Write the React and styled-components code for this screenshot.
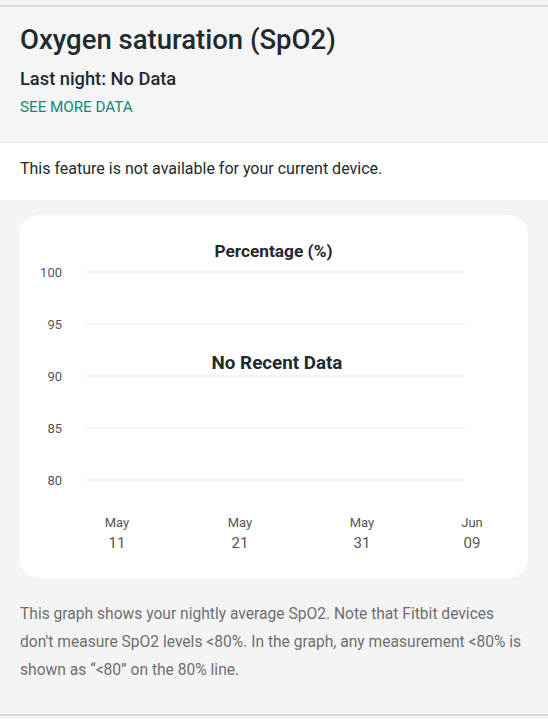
import React from "react";
import styled, { createGlobalStyle } from "styled-components";

const Global = createGlobalStyle`
  html, body { margin: 0; padding: 0; background: #f4f4f4; }
  body { font-family: Roboto, "Noto Sans", "Liberation Sans", sans-serif; }
  * { box-sizing: border-box; }
`;

const Page = styled.div`
  width: 548px;
  min-height: 719px;
  padding-top: 5px;
  background: #f4f4f4;
`;

const Header = styled.header`
  border-top: 2px solid #d9d9d9;
  border-bottom: 1px solid #e2e2e2;
  background: #f5f5f5;
  padding: 16px 20px 0;
  height: 138px;
  display: flex;
  flex-direction: column;
`;

const Title = styled.h1`
  margin: 0;
  font-size: 27.5px;
  line-height: 34px;
  font-weight: 500;
  color: #1e2a30;
`;

const Subtitle = styled.div`
  margin-top: 10px;
  font-size: 18.3px;
  line-height: 24px;
  font-weight: 500;
  color: #1e2a30;
`;

const Link = styled.a`
  margin-top: 6px;
  font-size: 15.2px;
  line-height: 20px;
  color: #10897e;
  text-transform: uppercase;
  text-decoration: none;
`;

const Notice = styled.div`
  background: #ffffff;
  height: 57px;
  padding: 0 20px 6px;
  display: flex;
  align-items: center;
  font-size: 16px;
  color: #222a2e;
`;

const Body = styled.section`
  padding: 15px 19px 0 19px;
`;

const Card = styled.div`
  width: 509px;
  background: #ffffff;
  border-radius: 20px;
  padding: 24px 0 17px;
  display: flex;
  flex-direction: column;
  align-items: center;
`;

const ChartTitle = styled.div`
  font-size: 17.3px;
  line-height: 24px;
  font-weight: 700;
  color: #1e2a30;
`;

const Plot = styled.svg`
  display: block;
  width: 509px;
  height: 298px;
  font-family: Roboto, "Noto Sans", "Liberation Sans", sans-serif;
`;

const Footnote = styled.p`
  margin: 22px 0 0;
  padding: 0 20px;
  font-size: 15.6px;
  line-height: 28px;
  color: #6f6f6f;
`;

const BottomRule = styled.div`
  margin-top: 30px;
  border-top: 2px solid #d9d9d9;
`;

const yTicks = [100, 95, 90, 85, 80];
const xTicks = [
  { m: "May", d: "11", x: 98 },
  { m: "May", d: "21", x: 221 },
  { m: "May", d: "31", x: 343 },
  { m: "Jun", d: "09", x: 453 },
];

export default function App() {
  return (
    <>
      <Global />
      <Page>
        <Header>
          <Title>Oxygen saturation (SpO2)</Title>
          <Subtitle>Last night: No Data</Subtitle>
          <Link href="#">See more data</Link>
        </Header>
        <Notice>This feature is not available for your current device.</Notice>
        <Body>
          <Card>
            <ChartTitle>Percentage (%)</ChartTitle>
            <Plot viewBox="0 0 509 298">
              {yTicks.map((v, i) => {
                const y = 9 + i * 52;
                return (
                  <g key={v}>
                    <line x1="65" x2="446" y1={y} y2={y} stroke="#f2f2f2" strokeWidth="1.5" />
                    <text x="43" y={y} textAnchor="end" dominantBaseline="central" fontSize="13" fill="#555">
                      {v}
                    </text>
                  </g>
                );
              })}
              <text x="258" y="100" textAnchor="middle" dominantBaseline="central" fontSize="18.8" fontWeight="700" fill="#1e2a30">
                No Recent Data
              </text>
              {xTicks.map((t) => (
                <g key={t.d}>
                  <text x={t.x} y="259" textAnchor="middle" dominantBaseline="central" fontSize="13" fill="#555">
                    {t.m}
                  </text>
                  <text x={t.x} y="280" textAnchor="middle" dominantBaseline="central" fontSize="15" fill="#555">
                    {t.d}
                  </text>
                </g>
              ))}
            </Plot>
          </Card>
        </Body>
        <Footnote>
          This graph shows your nightly average SpO2. Note that Fitbit devices don't measure SpO2 levels &lt;80%. In the graph, any measurement &lt;80% is shown as “&lt;80” on the 80% line.
        </Footnote>
        <BottomRule />
      </Page>
    </>
  );
}
